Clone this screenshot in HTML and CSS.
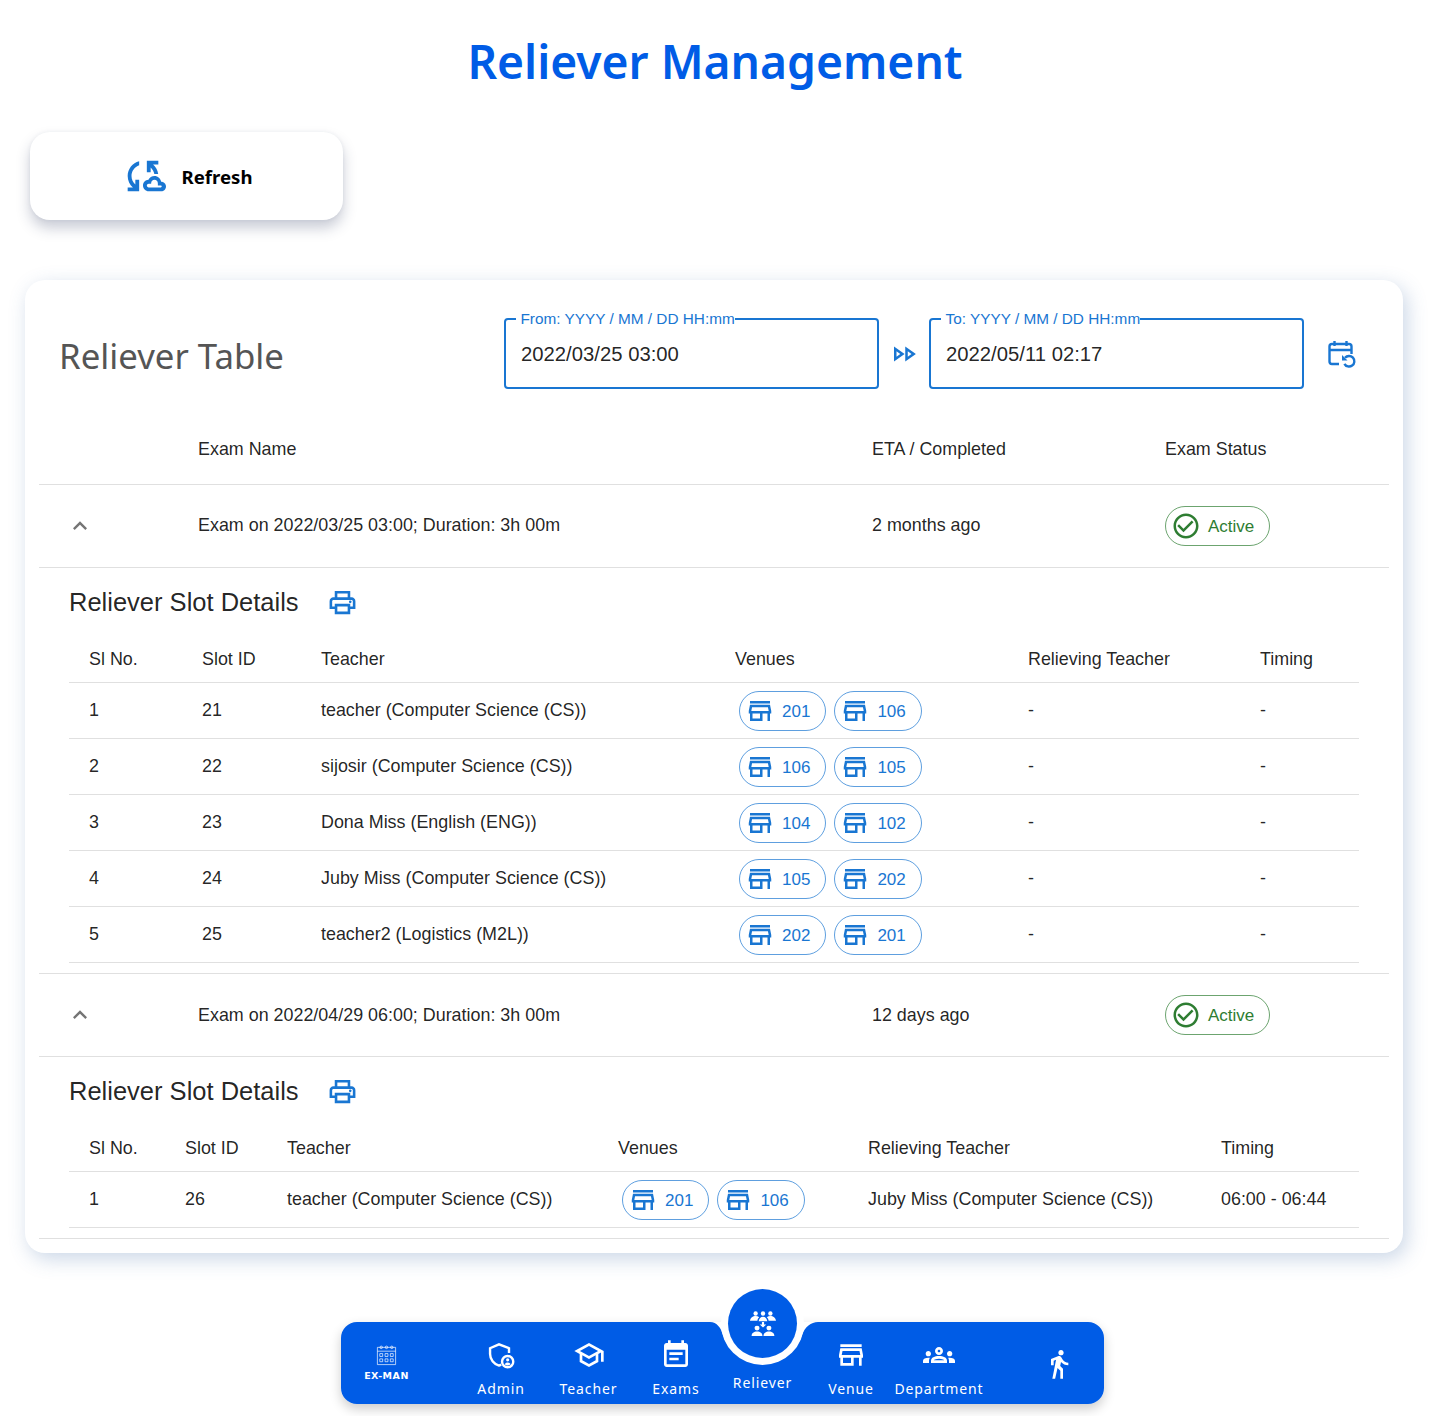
FILE: index.html
```html
<!DOCTYPE html>
<html lang="en">

<head>
    <meta charset="UTF-8">
    <title>Reliever Management</title>
    <link rel="stylesheet" href="styles.css">
</head>

<body>
    <h1 class="title">Reliever Management</h1>

    <button class="refresh">
        <svg class="refresh-icon" viewBox="0 0 24 24"><path d="M21.5 14.98c-.02 0-.03 0-.05.01C21.2 13.3 19.76 12 18 12c-1.4 0-2.6.83-3.16 2.02C13.26 14.1 12 15.4 12 17c0 1.66 1.34 3 3 3l6.5-.02c1.38 0 2.5-1.12 2.5-2.5s-1.12-2.5-2.5-2.5zm.01 3.02H15c-.55 0-1-.45-1-1s.45-1 1-1h1.25v-.25c0-.97.78-1.75 1.75-1.75s1.75.78 1.75 1.75V17s1.25 0 1.5.02c.28 0 .5.22.5.5 0 .27-.22.48-.49.48zM10 4.26v2.09C7.67 7.18 6 9.39 6 12c0 1.77.78 3.34 2 4.44V14h2v6H4v-2h2.73C5.06 16.54 4 14.4 4 12c0-3.73 2.55-6.85 6-7.74zM20 6h-2.73c1.43 1.26 2.41 3.01 2.66 5h-2.02c-.23-1.36-.93-2.55-1.91-3.44V10h-2V4h6v2z"/></svg>
        <span>Refresh</span>
    </button>

    <div class="card">
        <div class="card-head">
            <h2 class="card-title">Reliever Table</h2>
            <div class="date-field">
                <span class="date-label">From: YYYY / MM / DD HH:mm</span>
                <span class="date-value">2022/03/25 03:00</span>
            </div>
            <svg class="arrow-icon" viewBox="0 0 24 24"><path d="M15 9.86 18.03 12 15 14.14V9.86m-9 0L9.03 12 6 14.14V9.86M13 6v12l8.5-6L13 6zM4 6v12l8.5-6L4 6z"/></svg>
            <div class="date-field">
                <span class="date-label">To: YYYY / MM / DD HH:mm</span>
                <span class="date-value">2022/05/11 02:17</span>
            </div>
            <svg class="cal-icon" viewBox="0 0 30 30">
                <path d="M13 25H6a2.500 2.500 0 0 1-2.500-2.500V7.500A2.500 2.500 0 0 1 6 5h17a2.500 2.500 0 0 1 2.500 2.500V15" />
                <path d="M3.500 11h22M8.500 2v5M20.500 2v5" />
                <path d="M19 18.800a5.300 5.300 0 1 1-.6 6" />
                <path class="fill" d="M16 16v5.500h5.500z" />
            </svg>
        </div>

        <table class="outer">
            <thead>
                <tr>
                    <th class="c-toggle"></th>
                    <th class="c-name">Exam Name</th>
                    <th class="c-eta">ETA / Completed</th>
                    <th>Exam Status</th>
                </tr>
            </thead>
            <tbody>
                <tr class="exam">
                    <td><svg class="chevron" viewBox="0 0 24 24"><path d="M7.410 15.410 12 10.830l4.590 4.580L18 14l-6-6-6 6z"/></svg></td>
                    <td>Exam on 2022/03/25 03:00; Duration: 3h 00m</td>
                    <td>2 months ago</td>
                    <td>
                        <span class="status">
                            <svg viewBox="0 0 24 24"><path d="M16.590 7.580 10 14.170l-3.590-3.580L5 12l5 5 8-8zM12 2C6.480 2 2 6.480 2 12s4.480 10 10 10 10-4.480 10-10S17.520 2 12 2zm0 18c-4.420 0-8-3.580-8-8s3.580-8 8-8 8 3.580 8 8-3.580 8-8 8z"/></svg>
                            Active
                        </span>
                    </td>
                </tr>
                <tr>
                    <td colspan="4" class="detail-cell">
                        <div class="detail">
                            <div class="detail-head">
                                <h3>Reliever Slot Details</h3>
                                <svg class="print-icon" viewBox="0 0 24 24"><path d="M19 8h-1V3H6v5H5c-1.660 0-3 1.340-3 3v6h4v4h12v-4h4v-6c0-1.660-1.340-3-3-3zM8 5h8v3H8V5zm8 12v2H8v-4h8v2zm2-2v-2H6v2H4v-4c0-.550.450-1 1-1h14c.550 0 1 .450 1 1v4h-2z"/><circle cx="18" cy="11.500" r="1"/></svg>
                            </div>
                            <table class="slots slots-a">
                                <thead>
                                    <tr><th>Sl No.</th><th>Slot ID</th><th>Teacher</th><th>Venues</th><th>Relieving Teacher</th><th>Timing</th></tr>
                                </thead>
                                <tbody>
                                    <tr>
                                        <td>1</td><td>21</td><td>teacher (Computer Science (CS))</td>
                                        <td><div class="chips">
                                            <span class="chip"><svg viewBox="0 0 24 24"><use href="#store"/></svg>201</span>
                                            <span class="chip"><svg viewBox="0 0 24 24"><use href="#store"/></svg>106</span>
                                        </div></td>
                                        <td>-</td><td>-</td>
                                    </tr>
                                    <tr>
                                        <td>2</td><td>22</td><td>sijosir (Computer Science (CS))</td>
                                        <td><div class="chips">
                                            <span class="chip"><svg viewBox="0 0 24 24"><use href="#store"/></svg>106</span>
                                            <span class="chip"><svg viewBox="0 0 24 24"><use href="#store"/></svg>105</span>
                                        </div></td>
                                        <td>-</td><td>-</td>
                                    </tr>
                                    <tr>
                                        <td>3</td><td>23</td><td>Dona Miss (English (ENG))</td>
                                        <td><div class="chips">
                                            <span class="chip"><svg viewBox="0 0 24 24"><use href="#store"/></svg>104</span>
                                            <span class="chip"><svg viewBox="0 0 24 24"><use href="#store"/></svg>102</span>
                                        </div></td>
                                        <td>-</td><td>-</td>
                                    </tr>
                                    <tr>
                                        <td>4</td><td>24</td><td>Juby Miss (Computer Science (CS))</td>
                                        <td><div class="chips">
                                            <span class="chip"><svg viewBox="0 0 24 24"><use href="#store"/></svg>105</span>
                                            <span class="chip"><svg viewBox="0 0 24 24"><use href="#store"/></svg>202</span>
                                        </div></td>
                                        <td>-</td><td>-</td>
                                    </tr>
                                    <tr>
                                        <td>5</td><td>25</td><td>teacher2 (Logistics (M2L))</td>
                                        <td><div class="chips">
                                            <span class="chip"><svg viewBox="0 0 24 24"><use href="#store"/></svg>202</span>
                                            <span class="chip"><svg viewBox="0 0 24 24"><use href="#store"/></svg>201</span>
                                        </div></td>
                                        <td>-</td><td>-</td>
                                    </tr>
                                </tbody>
                            </table>
                        </div>
                    </td>
                </tr>
                <tr class="exam">
                    <td><svg class="chevron" viewBox="0 0 24 24"><path d="M7.410 15.410 12 10.830l4.590 4.580L18 14l-6-6-6 6z"/></svg></td>
                    <td>Exam on 2022/04/29 06:00; Duration: 3h 00m</td>
                    <td>12 days ago</td>
                    <td>
                        <span class="status">
                            <svg viewBox="0 0 24 24"><path d="M16.590 7.580 10 14.170l-3.590-3.580L5 12l5 5 8-8zM12 2C6.480 2 2 6.480 2 12s4.480 10 10 10 10-4.480 10-10S17.520 2 12 2zm0 18c-4.420 0-8-3.580-8-8s3.580-8 8-8 8 3.580 8 8-3.580 8-8 8z"/></svg>
                            Active
                        </span>
                    </td>
                </tr>
                <tr>
                    <td colspan="4" class="detail-cell">
                        <div class="detail">
                            <div class="detail-head">
                                <h3>Reliever Slot Details</h3>
                                <svg class="print-icon" viewBox="0 0 24 24"><path d="M19 8h-1V3H6v5H5c-1.660 0-3 1.340-3 3v6h4v4h12v-4h4v-6c0-1.660-1.340-3-3-3zM8 5h8v3H8V5zm8 12v2H8v-4h8v2zm2-2v-2H6v2H4v-4c0-.550.450-1 1-1h14c.550 0 1 .450 1 1v4h-2z"/><circle cx="18" cy="11.500" r="1"/></svg>
                            </div>
                            <table class="slots slots-b">
                                <thead>
                                    <tr><th>Sl No.</th><th>Slot ID</th><th>Teacher</th><th>Venues</th><th>Relieving Teacher</th><th>Timing</th></tr>
                                </thead>
                                <tbody>
                                    <tr>
                                        <td>1</td><td>26</td><td>teacher (Computer Science (CS))</td>
                                        <td><div class="chips">
                                            <span class="chip"><svg viewBox="0 0 24 24"><use href="#store"/></svg>201</span>
                                            <span class="chip"><svg viewBox="0 0 24 24"><use href="#store"/></svg>106</span>
                                        </div></td>
                                        <td>Juby Miss (Computer Science (CS))</td><td>06:00 - 06:44</td>
                                    </tr>
                                </tbody>
                            </table>
                        </div>
                    </td>
                </tr>
            </tbody>
        </table>
    </div>

    <nav class="nav">
        <svg class="nav-bg" viewBox="0 0 763 82"><path d="M16 0H369C376 0 380 6 382 13A41.500 41.500 0 0 0 461 13C464 5 470 0 477 0H747A16 16 0 0 1 763 16V66A16 16 0 0 1 747 82H16A16 16 0 0 1 0 66V16A16 16 0 0 1 16 0Z"/></svg>

        <div class="logo">
            <svg viewBox="0 0 24 24">
                <path d="M2.500 3.500h19v18h-19zM2.500 7.500h19" />
                <circle cx="6.500" cy="3.500" r="1.300"/><circle cx="12" cy="3.500" r="1.300"/><circle cx="17.500" cy="3.500" r="1.300"/>
                <path d="M5 10h3v3H5zM10.500 10h3v3h-3zM16 10h3v3h-3zM5 15.500h3v3H5zM10.500 15.500h3v3h-3zM16 15.500h3v3h-3z" />
            </svg>
            <span>EX-MAN</span>
        </div>

        <a class="nav-item nav-admin">
            <svg viewBox="0 0 24 24"><path class="line" d="M18 10.500V6.900L10.500 4 3.800 6.900v4.300c0 4 2.800 7.600 6.700 8.700.6-.2 1.100-.4 1.600-.7"/><circle class="line" cx="17" cy="17" r="4.200"/><circle cx="17" cy="15.600" r="1.200"/><path d="M14.800 19c.4-1 1.300-1.400 2.200-1.400s1.800.4 2.200 1.400c-.6.600-1.300.9-2.200.9s-1.600-.3-2.200-.9z"/></svg>
            Admin
        </a>
        <a class="nav-item nav-teacher">
            <svg viewBox="0 0 24 24"><path d="M12 3 1 9l4 2.180v6L12 21l7-3.820v-6l2-1.090V17h2V9L12 3zm6.820 6L12 12.720 5.180 9 12 5.280 18.820 9zM17 15.990l-5 2.730-5-2.730v-3.720L12 15l5-2.730v3.720z"/></svg>
            Teacher
        </a>
        <a class="nav-item nav-exams">
            <svg viewBox="0 0 24 24"><path d="M17 10H7v2h10v-2zm2-7h-1V1h-2v2H8V1H6v2H5c-1.110 0-1.990.9-1.990 2L3 19c0 1.100.89 2 2 2h14c1.100 0 2-.9 2-2V5c0-1.100-.9-2-2-2zm0 16H5V8h14v11zm-5-5H7v2h7v-2z"/></svg>
            Exams
        </a>
        <a class="nav-item nav-reliever">
            <span class="bubble">
                <svg viewBox="0 0 24 24">
                    <circle cx="5.200" cy="2.300" r="2"/><circle cx="12" cy="2.300" r="2"/><circle cx="18.800" cy="2.300" r="2"/>
                    <path d="M0 9c.3-2.600 2.600-4.400 5.200-4.400 1.300 0 2.400.4 3.300 1.100C7.500 6.500 7 7.600 6.800 9zM8 9.500c.3-2.700 1.900-4.300 4-4.300s3.700 1.600 4 4.300zM24 9c-.3-2.600-2.600-4.400-5.200-4.400-1.300 0-2.400.4-3.300 1.100 1 .8 1.500 1.900 1.700 3.300z"/>
                    <path d="M11 10.200h2v2.300h2L12 15.200 9 12.500h2z"/>
                    <circle cx="6.500" cy="15.800" r="2.300"/><circle cx="17.500" cy="15.800" r="2.300"/>
                    <path d="M1.500 23c0-2.400 2.100-4 5-4s5 1.600 5 4zM12.500 23c0-2.400 2.100-4 5-4s5 1.600 5 4z"/>
                </svg>
            </span>
            Reliever
        </a>
        <a class="nav-item nav-venue">
            <svg viewBox="0 0 24 24"><use href="#store"/></svg>
            Venue
        </a>
        <a class="nav-item nav-dept">
            <svg viewBox="0 0 24 24"><path d="M4 13c1.100 0 2-.9 2-2s-.9-2-2-2-2 .9-2 2 .9 2 2 2zm1.130 1.100c-.37-.06-.74-.1-1.130-.1-.99 0-1.930.21-2.780.58C.48 14.900 0 15.620 0 16.430V18h4.500v-1.610c0-.83.23-1.610.63-2.290zM20 13c1.100 0 2-.9 2-2s-.9-2-2-2-2 .9-2 2 .9 2 2 2zm4 3.430c0-.81-.48-1.530-1.220-1.850-.85-.37-1.790-.58-2.780-.58-.39 0-.76.04-1.130.1.4.68.63 1.460.63 2.290V18H24v-1.570zm-7.760-2.780C15.070 13.140 13.630 12.750 12 12.750c-1.630 0-3.070.39-4.240.9C6.680 14.130 6 15.210 6 16.390V18h12v-1.610c0-1.180-.68-2.260-1.760-2.740zM8.070 16c.09-.23.13-.39.91-.69.97-.38 1.990-.56 3.020-.56s2.050.18 3.020.56c.77.3.81.46.91.69H8.070zM12 8c.55 0 1 .45 1 1s-.45 1-1 1-1-.45-1-1 .45-1 1-1m0-2c-1.660 0-3 1.340-3 3s1.340 3 3 3 3-1.340 3-3-1.340-3-3-3z"/></svg>
            Department
        </a>
        <a class="nav-item nav-walk">
            <svg viewBox="0 0 24 24"><path d="M13.500 5.500c1.100 0 2-.9 2-2s-.9-2-2-2-2 .9-2 2 .9 2 2 2zM9.800 8.900 7 23h2.100l1.800-8 2.100 2v6h2v-7.500l-2.100-2 .6-3C14.800 12 16.800 13 19 13v-2c-1.900 0-3.500-1-4.300-2.400l-1-1.600c-.4-.6-1-1-1.700-1-.3 0-.5.1-.8.1L6 8.300V13h2V9.600l1.800-.7"/></svg>
        </a>
    </nav>

    <svg class="defs" width="0" height="0"><defs>
        <path id="store" d="M18.360 9l.6 3H5.040l.6-3h12.720M20 4H4v2h16V4zm0 3H4l-1 5v2h1v6h10v-6h4v6h2v-6h1v-2l-1-5zM6 18v-4h6v4H6z"/>
    </defs></svg>
</body>

</html>
```

FILE: styles.css
```css
* {
    margin: 0;
    padding: 0;
    box-sizing: border-box;
}

html,
body {
    background: #fff;
}

body {
    height: 1416px;
    overflow: hidden;
    position: relative;
    font-family: "Liberation Sans", Arial, sans-serif;
    color: rgba(0, 0, 0, .87);
}

.defs {
    position: absolute;
}

.title {
    padding: 29px 15px 0 0;
    height: 132px;
    text-align: center;
    font-family: "Noto Sans", sans-serif;
    font-size: 46.200px;
    line-height: 66px;
    font-weight: 600;
    color: #005ce6;
}

.refresh {
    display: flex;
    align-items: center;
    justify-content: center;
    gap: 16px;
    width: 313px;
    height: 88px;
    margin-left: 30px;
    padding-right: 1px;
    border: 0;
    border-radius: 20px;
    background: #fff;
    box-shadow: 0 8px 14px rgba(40, 50, 90, .25), 0 0 4px rgba(40, 50, 90, .06);
    font-family: "Noto Sans", sans-serif;
    font-size: 18.600px;
    font-weight: 700;
    color: #000;
}

.refresh-icon {
    width: 46px;
    height: 46px;
    fill: #1976d2;
}

.card {
    width: 1378px;
    height: 973px;
    margin: 60px 0 0 25px;
    padding: 0 14px;
    border-radius: 20px;
    background: #fff;
    box-shadow: 4px 6px 20px rgba(70, 110, 170, .28);
}

.card-head {
    display: flex;
    align-items: center;
    height: 135px;
    padding-top: 12px;
}

.card-title {
    width: 465px;
    margin-top: 3px;
    padding-left: 20px;
    font-family: "Noto Sans", sans-serif;
    font-size: 34.800px;
    font-weight: 400;
    color: #555;
}

.date-field {
    position: relative;
    display: flex;
    align-items: center;
    width: 374.500px;
    height: 71px;
    padding: 1px 0 0 15px;
    border: 2px solid #1976d2;
    border-radius: 4px;
}

.date-label {
    position: absolute;
    top: -10px;
    left: 9.500px;
    padding-left: 5px;
    background: #fff;
    font-size: 15.350px;
    line-height: 18px;
    color: #1976d2;
}

.date-value {
    font-size: 20.300px;
}

.arrow-icon {
    width: 30px;
    height: 30px;
    margin: 0 10.250px;
    fill: #1976d2;
}

.cal-icon {
    width: 30px;
    height: 30px;
    margin-left: 22px;
    fill: none;
    stroke: #1976d2;
    stroke-width: 2.400;
}

.cal-icon .fill {
    fill: #1976d2;
    stroke: none;
}

table {
    width: 100%;
    border-collapse: collapse;
    table-layout: fixed;
}

th,
td {
    font-weight: 400;
    font-size: 17.900px;
    text-align: left;
}

.outer > thead th {
    height: 69px;
    padding: 0 16px;
    border-bottom: 1px solid #e0e0e0;
}

.c-toggle {
    width: 143px;
}

.c-name {
    width: 674px;
}

.c-eta {
    width: 293px;
}

.exam td {
    height: 83px;
    padding: 0 16px;
    border-bottom: 1px solid #e0e0e0;
}

.chevron {
    display: block;
    width: 28px;
    height: 28px;
    margin-left: 11px;
    fill: #757575;
}

.status {
    display: inline-flex;
    align-items: center;
    gap: 7px;
    width: 105px;
    height: 40px;
    padding: 2px 0 0 5px;
    border: 1px solid rgba(46, 125, 50, .7);
    border-radius: 20px;
    font-size: 17px;
    color: #2e7d32;
}

.status svg {
    width: 30px;
    height: 30px;
    margin-top: -2px;
    fill: #2e7d32;
}

.detail-cell {
    padding: 0 30px 10px;
    border-bottom: 1px solid #e0e0e0;
}

.detail-head {
    display: flex;
    align-items: center;
    gap: 28.500px;
    height: 69px;
}

.detail-head h3 {
    font-size: 25.500px;
    font-weight: 400;
}

.print-icon {
    width: 31px;
    height: 31px;
    fill: #1976d2;
}

.slots th {
    height: 46px;
    padding: 0 0 0 20px;
    border-bottom: 1px solid #e0e0e0;
}

.slots-b th {
    height: 45px;
    padding-top: 1px;
}

.slots td {
    height: 56px;
    padding: 0 0 0 20px;
    border-bottom: 1px solid #e0e0e0;
}

.slots-a th:nth-child(1) {
    width: 113px;
}

.slots-a th:nth-child(2) {
    width: 119px;
}

.slots-a th:nth-child(3) {
    width: 414px;
}

.slots-a th:nth-child(4) {
    width: 293px;
}

.slots-a th:nth-child(5) {
    width: 232px;
}

.slots-b th:nth-child(1) {
    width: 96px;
}

.slots-b th:nth-child(2) {
    width: 102px;
}

.slots-b th:nth-child(3) {
    width: 331px;
}

.slots-b th:nth-child(4) {
    width: 250px;
}

.slots-b th:nth-child(5) {
    width: 353px;
}

.chips {
    display: flex;
    gap: 8px;
    margin-left: 4px;
}

.slots-b .chips {
    margin-top: 2px;
}

.chip {
    display: flex;
    align-items: center;
    gap: 7px;
    height: 40px;
    padding: 2px 15px 0 5px;
    border: 1px solid rgba(25, 118, 210, .7);
    border-radius: 20px;
    font-size: 17px;
    color: #1976d2;
}

.chip svg {
    width: 30px;
    height: 30px;
    margin-top: -2px;
    fill: #1976d2;
}

.nav {
    position: absolute;
    top: 1322px;
    left: 341px;
    width: 763px;
    height: 82px;
    color: #fff;
}

.nav::before {
    content: "";
    position: absolute;
    top: 0;
    right: 0;
    bottom: 0;
    left: 0;
    border-radius: 16px;
    box-shadow: 0 5px 12px rgba(0, 0, 0, .2);
}

.nav-bg {
    position: absolute;
    top: 0;
    left: 0;
    width: 763px;
    height: 82px;
    fill: #005ce6;
}

.nav-item {
    position: absolute;
    display: flex;
    flex-direction: column;
    align-items: center;
    top: 17px;
    width: 120px;
    font-family: "Noto Sans", sans-serif;
    font-size: 14px;
    line-height: 20px;
    letter-spacing: .9px;
    white-space: nowrap;
}

.nav-item svg {
    width: 32px;
    height: 32px;
    margin-bottom: 8px;
    fill: #fff;
}

.nav-item .line {
    fill: none;
    stroke: #fff;
    stroke-width: 1.800;
}

.nav-admin {
    left: 100px;
}

.nav-teacher {
    left: 187.500px;
}

.nav-exams {
    left: 275px;
}

.nav-reliever {
    left: 361.500px;
    top: -33px;
}

.bubble {
    display: flex;
    align-items: center;
    justify-content: center;
    width: 69px;
    height: 69px;
    margin-bottom: 15px;
    border-radius: 50%;
    background: #005ce6;
    box-shadow: 0 0 0 7px #fff;
}

.bubble svg {
    width: 26px;
    height: 26px;
    margin: 0;
}

.nav-venue {
    left: 450px;
}

.nav-dept {
    left: 538px;
}

.nav-walk {
    left: 658px;
    top: 26px;
}

.logo {
    position: absolute;
    top: 22px;
    left: 15.500px;
    display: flex;
    flex-direction: column;
    align-items: center;
    width: 60px;
    font-family: "DejaVu Sans", sans-serif;
    font-size: 9.500px;
    font-weight: 700;
    letter-spacing: .5px;
}

.logo svg {
    width: 23px;
    height: 23px;
    margin-bottom: 3px;
    fill: none;
    stroke: rgba(255, 255, 255, .8);
    stroke-width: .9;
}
```
